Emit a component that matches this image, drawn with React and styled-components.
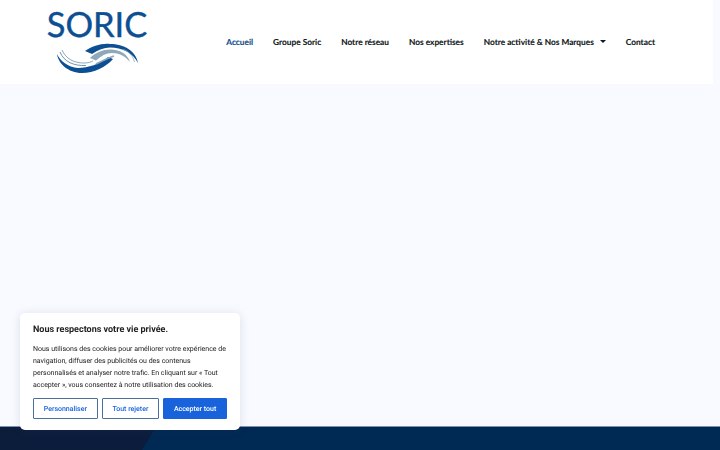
import React from 'react';
import styled, { createGlobalStyle } from 'styled-components';

const GlobalStyle = createGlobalStyle`
  html, body {
    margin: 0;
    height: 100%;
    overflow: hidden;
    background: #f8faff;
    text-rendering: geometricPrecision;
  }
  #root {
    height: 100%;
  }
`;

const Page = styled.div`
  display: flex;
  flex-direction: column;
  height: 450px;
  font-family: 'Lato', 'Liberation Sans', sans-serif;
`;

const Header = styled.header`
  display: flex;
  align-items: center;
  justify-content: space-between;
  height: 84px;
  width: 713px;
  background: #fff;
  padding: 0 58px 0 46px;
  box-sizing: border-box;
`;

const Logo = styled.div`
  display: flex;
  flex-direction: column;
  align-items: center;
  gap: 3px;
  width: 102px;
`;

const LogoName = styled.span`
  font-size: 34.5px;
  line-height: 28px;
  color: #0d4f93;
  -webkit-text-stroke: 0.4px #0d4f93;
`;

const Nav = styled.nav`
  display: flex;
  align-items: center;
  gap: 20px;
  margin-top: -1px;
`;

const NavLink = styled.a`
  display: flex;
  align-items: center;
  gap: 6px;
  font-size: 8.3px;
  font-weight: 700;
  color: ${props => (props.$active ? '#0f4c8a' : '#101820')};
  -webkit-text-stroke: 0.12px ${props => (props.$active ? '#0f4c8a' : '#101820')};
  white-space: nowrap;
`;

const Main = styled.main`
  flex: 1;
`;

const Footer = styled.footer`
  position: relative;
  height: 24px;
  background: #002953;
  border-top: 1px solid #7d93ad;
  box-sizing: border-box;

  &::before {
    content: '';
    position: absolute;
    inset: 0;
    width: 156px;
    background: #0c1d3c;
    clip-path: polygon(0 0, 100% 0, 91% 100%, 0 100%);
  }
`;

const CookieCard = styled.section`
  position: fixed;
  left: 20px;
  bottom: 20px;
  width: 220px;
  box-sizing: border-box;
  padding: 11px 13px 11px;
  background: #fff;
  border-radius: 5px;
  box-shadow: 0 1px 10px rgba(40, 60, 100, 0.14);
  font-family: 'Roboto', 'Liberation Sans', sans-serif;
`;

const CookieTitle = styled.h2`
  margin: 0 0 6px;
  font-size: 9px;
  line-height: 13px;
  font-weight: 700;
  color: #212121;
`;

const CookieText = styled.p`
  margin: 0 0 7px;
  font-size: 7px;
  line-height: 12px;
  color: #212121;
`;

const Buttons = styled.div`
  display: flex;
  justify-content: space-between;
  gap: 4px;
`;

const CookieButton = styled.button`
  flex: 1 1 auto;
  height: 21px;
  padding: 0 9px;
  border: 1.5px solid ${props => (props.$primary ? '#1863dc' : '#4a6f9f')};
  border-radius: 1px;
  background: ${props => (props.$primary ? '#1863dc' : '#fff')};
  color: ${props => (props.$primary ? '#fff' : '#1863dc')};
  font-family: inherit;
  font-size: 7px;
  font-weight: 500;
  white-space: nowrap;
  text-rendering: geometricPrecision;
`;

function LogoMark() {
  return (
    <svg width="81" height="32" viewBox="57 41 81 32" fill="none">
      <path d="M57 53 C58 62 68 72 82 72 C94 72 106 66 113 58 L108 56 C100 63 88 67 78 67 C68 66 60 60 57 53 Z" fill="#0d4f93" />
      <path d="M85 50 C92 45 102 42 110 43 C124 43 136 50 138 62 C133 52 122 46.5 110 46.5 C104 46.5 98 49 92 53 Z" fill="#0d4f93" />
      <path d="M90 57 C96 51 104 48 112 48.5 C121 49 128 54 130 61 C125 55 119 52 112 52 C106 52 101 55 96 59.5 Z" fill="#8fa9b8" />
      <path d="M62 49 C66 58 74 62 84 62 C88 62 91 61 93 60" stroke="#8fa9b8" strokeWidth="1" />
      <path d="M60 51 C64 61 74 65 86 64.5" stroke="#5f87a6" strokeWidth="0.9" />
      <path d="M96 63 C102 60 108 57 114 55" stroke="#8fa9b8" strokeWidth="1.8" />
      <path d="M123 48.5 C129 50 133 55 134.5 61" stroke="#8fa9b8" strokeWidth="0.8" />
    </svg>
  );
}

function Caret() {
  return (
    <svg width="6" height="3" viewBox="0 0 6 3">
      <path d="M0 0 H6 L3 3 Z" fill="#101820" />
    </svg>
  );
}

export default function App() {
  return (
    <Page>
      <GlobalStyle />
      <Header>
        <Logo>
          <LogoName>SORIC</LogoName>
          <LogoMark />
        </Logo>
        <Nav>
          <NavLink $active>Accueil</NavLink>
          <NavLink>Groupe Soric</NavLink>
          <NavLink>Notre réseau</NavLink>
          <NavLink>Nos expertises</NavLink>
          <NavLink>
            Notre activité &amp; Nos Marques
            <Caret />
          </NavLink>
          <NavLink>Contact</NavLink>
        </Nav>
      </Header>
      <Main />
      <Footer />
      <CookieCard>
        <CookieTitle>Nous respectons votre vie privée.</CookieTitle>
        <CookieText>
          Nous utilisons des cookies pour améliorer votre expérience de navigation, diffuser des
          publicités ou des contenus personnalisés et analyser notre trafic. En cliquant sur « Tout
          accepter », vous consentez à notre utilisation des cookies.
        </CookieText>
        <Buttons>
          <CookieButton>Personnaliser</CookieButton>
          <CookieButton>Tout rejeter</CookieButton>
          <CookieButton $primary>Accepter tout</CookieButton>
        </Buttons>
      </CookieCard>
    </Page>
  );
}
